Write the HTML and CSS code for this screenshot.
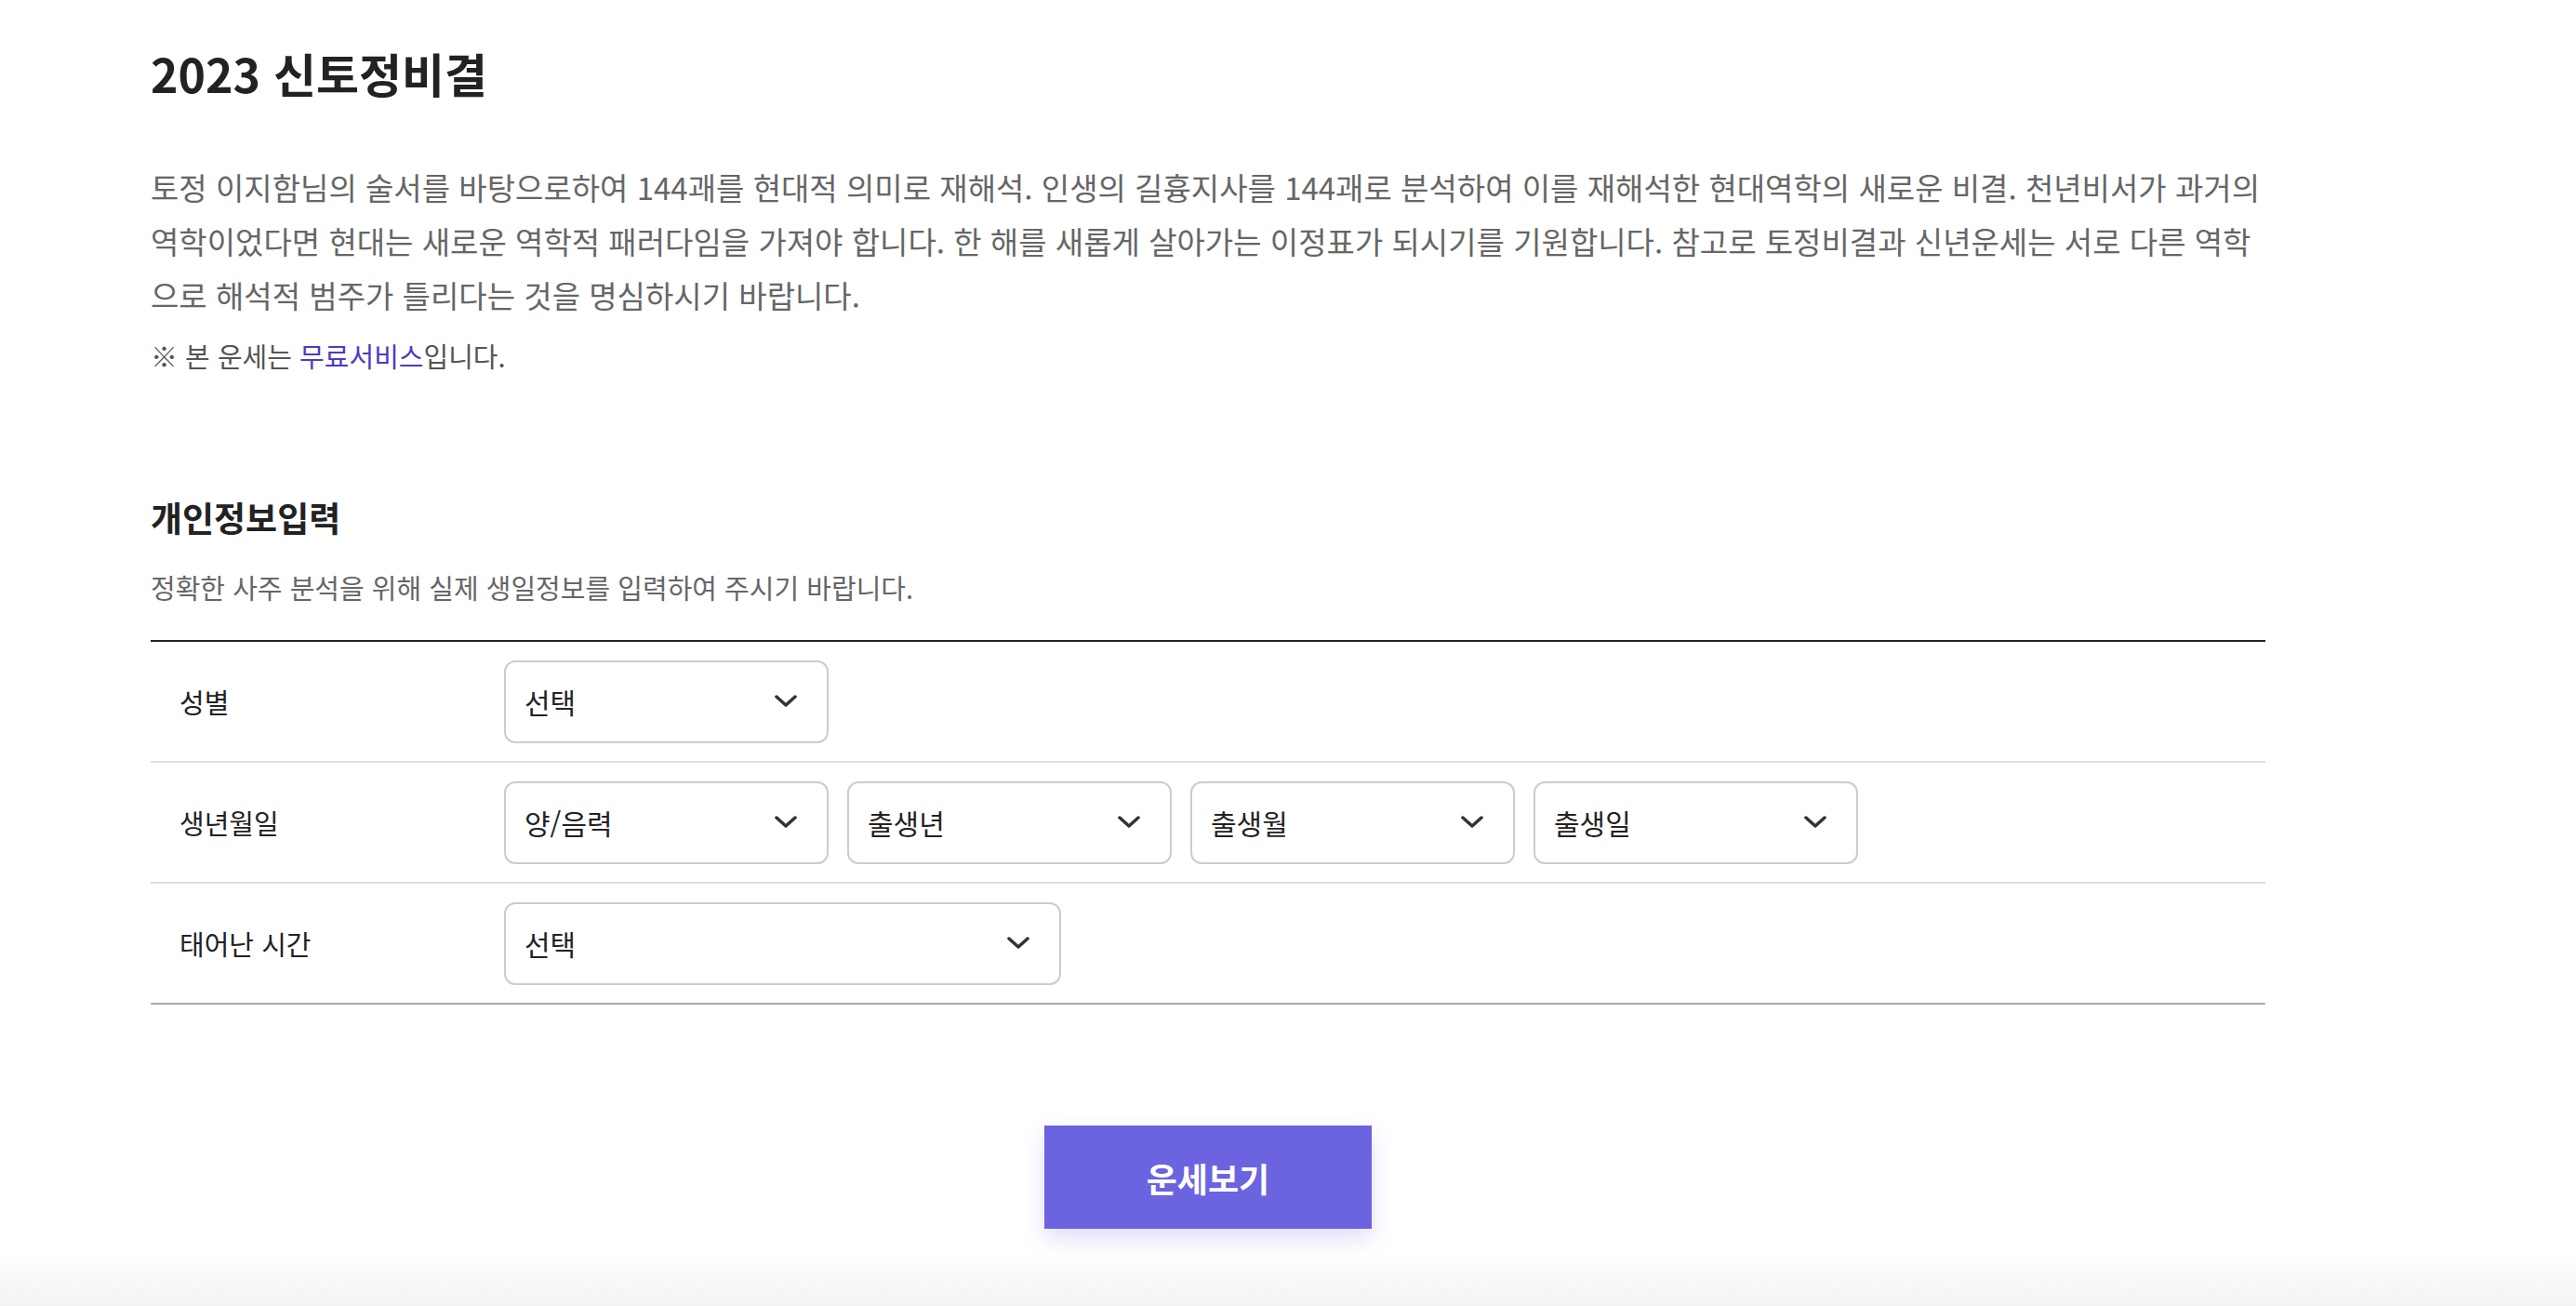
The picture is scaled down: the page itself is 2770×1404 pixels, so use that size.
FILE: index.html
```html
<!DOCTYPE html>
<html lang="ko">

<head>
    <meta charset="UTF-8">
    <meta name="viewport" content="width=device-width, initial-scale=1.0">
    <title>2023 신토정비결</title>
    <link rel="stylesheet" href="styles.css">
</head>

<body>
    <div class="container">
        <h1 class="title">2023 신토정비결</h1>
        <p class="intro">
            토정 이지함님의 술서를 바탕으로하여 144괘를 현대적 의미로 재해석. 인생의 길흉지사를 144괘로 분석하여 이를 재해석한 현대역학의 새로운 비결. 천년비서가 과거의<br>
            역학이었다면 현대는 새로운 역학적 패러다임을 가져야 합니다. 한 해를 새롭게 살아가는 이정표가 되시기를 기원합니다. 참고로 토정비결과 신년운세는 서로 다른 역학<br>
            으로 해석적 범주가 틀리다는 것을 명심하시기 바랍니다.
        </p>
        <p class="note">※ 본 운세는 <a href="#" class="free">무료서비스</a>입니다.</p>

        <h2 class="section-title">개인정보입력</h2>
        <p class="section-desc">정확한 사주 분석을 위해 실제 생일정보를 입력하여 주시기 바랍니다.</p>

        <div class="form-table">
            <div class="form-row">
                <div class="label">성별</div>
                <div class="fields">
                    <div class="select">
                        <span>선택</span>
                        <svg class="chev" viewBox="0 0 24 14"><polyline points="2,2 12,11 22,2" /></svg>
                    </div>
                </div>
            </div>
            <div class="form-row">
                <div class="label">생년월일</div>
                <div class="fields">
                    <div class="select">
                        <span>양/음력</span>
                        <svg class="chev" viewBox="0 0 24 14"><polyline points="2,2 12,11 22,2" /></svg>
                    </div>
                    <div class="select">
                        <span>출생년</span>
                        <svg class="chev" viewBox="0 0 24 14"><polyline points="2,2 12,11 22,2" /></svg>
                    </div>
                    <div class="select">
                        <span>출생월</span>
                        <svg class="chev" viewBox="0 0 24 14"><polyline points="2,2 12,11 22,2" /></svg>
                    </div>
                    <div class="select">
                        <span>출생일</span>
                        <svg class="chev" viewBox="0 0 24 14"><polyline points="2,2 12,11 22,2" /></svg>
                    </div>
                </div>
            </div>
            <div class="form-row">
                <div class="label">태어난 시간</div>
                <div class="fields">
                    <div class="select wide">
                        <span>선택</span>
                        <svg class="chev" viewBox="0 0 24 14"><polyline points="2,2 12,11 22,2" /></svg>
                    </div>
                </div>
            </div>
        </div>

        <div class="actions">
            <button class="button">운세보기</button>
        </div>
    </div>

    <div class="footer"></div>
</body>

</html>
```
FILE: styles.css
```css
body {
    font-family: "Noto Sans CJK KR", "Noto Sans", sans-serif;
    margin: 0;
    background-color: #fff;
    color: #222;
}

.container {
    width: 2274px;
    margin: 0 0 0 162px;
    padding-top: 43px;
}

.title {
    font-size: 50px;
    font-weight: 700;
    line-height: 70px;
    margin: 0;
    color: #222;
}

.intro {
    font-size: 33px;
    line-height: 58px;
    color: #666;
    margin: 59px 0 0;
}

.note {
    font-size: 29px;
    line-height: 40px;
    color: #555;
    margin: 16px 0 0;
}

.free {
    color: #4b3cc4;
    text-decoration: none;
}

.section-title {
    font-size: 37px;
    font-weight: 700;
    line-height: 50px;
    margin: 129px 0 0;
    color: #222;
}

.section-desc {
    font-size: 29px;
    line-height: 40px;
    color: #666;
    margin: 30px 0 0;
}

.form-table {
    margin-top: 37px;
    border-top: 2px solid #222;
    border-bottom: 2px solid #aaa;
}

.form-row {
    display: flex;
    align-items: center;
    height: 128px;
}

.form-row + .form-row {
    border-top: 2px solid #ddd;
}

.label {
    width: 349px;
    padding-left: 31px;
    font-size: 29px;
    color: #222;
}

.fields {
    display: flex;
    gap: 20px;
}

.select {
    box-sizing: border-box;
    width: 349px;
    height: 89px;
    border: 2px solid #ccc;
    border-radius: 12px;
    padding: 0 32px 0 20px;
    display: flex;
    align-items: center;
    justify-content: space-between;
    font-size: 30px;
    color: #222;
    background: #fff;
}

.select.wide {
    width: 599px;
}

.chev {
    width: 24px;
    height: 14px;
    fill: none;
    stroke: #333;
    stroke-width: 3.5;
    stroke-linecap: round;
    stroke-linejoin: round;
}

.actions {
    display: flex;
    justify-content: center;
    margin-top: 130px;
}

.button {
    width: 352px;
    height: 111px;
    border: none;
    background-color: #6c63e0;
    color: white;
    font-family: inherit;
    font-size: 36px;
    font-weight: 700;
    cursor: pointer;
    box-shadow: 0 10px 22px rgba(108, 99, 224, 0.22);
}

.footer {
    margin-top: 29px;
    height: 60px;
    background: linear-gradient(#fff, #f1f1f1);
}
```
